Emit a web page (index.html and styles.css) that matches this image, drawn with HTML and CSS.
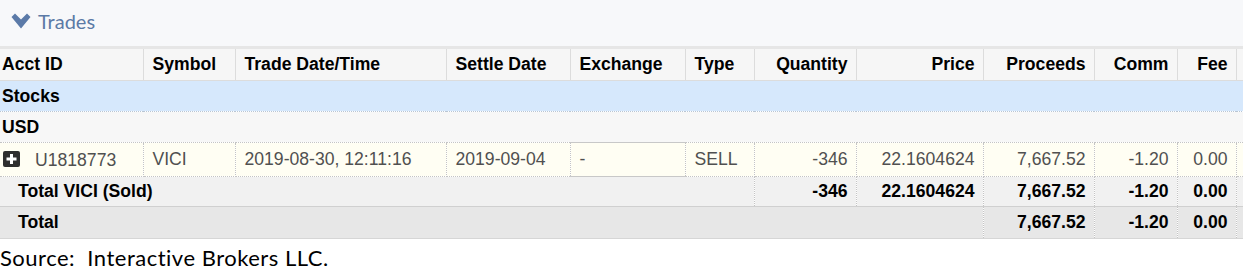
FILE: index.html
```html
<!DOCTYPE html>
<html>
<head>
<meta charset="utf-8">
<link rel="stylesheet" href="styles.css">
</head>
<body>
<div class="section-head">
  <svg class="chev" width="20" height="16" viewBox="0 0 20 16"><polygon points="0.5,4 4,0.5 10,6.5 16,0.5 19.5,4 10,15.5" fill="#5b7aa8"/></svg>
  <span class="section-title">Trades</span>
</div>
<div class="table-wrap">
<table class="trades">
  <colgroup>
    <col class="w-acct"><col class="w-sym"><col class="w-trade"><col class="w-settle"><col class="w-exch"><col class="w-type"><col class="w-qty"><col class="w-price"><col class="w-proc"><col class="w-comm"><col class="w-fee"><col class="w-extra">
  </colgroup>
  <thead>
    <tr class="hdr">
      <th class="first">Acct ID</th><th>Symbol</th><th>Trade Date/Time</th><th>Settle Date</th><th>Exchange</th><th>Type</th><th class="num">Quantity</th><th class="num">Price</th><th class="num">Proceeds</th><th class="num">Comm</th><th class="num">Fee</th><th></th>
    </tr>
  </thead>
  <tbody>
    <tr class="cat"><td colspan="12" class="first">Stocks</td></tr>
    <tr class="cur"><td colspan="12" class="first">USD</td></tr>
    <tr class="row">
      <td class="first acct"><span class="plus"><svg width="17" height="16" viewBox="0 0 17 16"><rect width="17" height="16" rx="2" fill="#2e2e2e"/><rect x="7" y="3" width="3" height="10" fill="#fff"/><rect x="3.5" y="6.5" width="10" height="3" fill="#fff"/></svg></span><span>U1818773</span></td>
      <td>VICI</td>
      <td>2019-08-30, 12:11:16</td>
      <td>2019-09-04</td>
      <td class="exch">-</td>
      <td>SELL</td>
      <td class="num">-346</td>
      <td class="num">22.1604624</td>
      <td class="num">7,667.52</td>
      <td class="num">-1.20</td>
      <td class="num">0.00</td>
      <td></td>
    </tr>
    <tr class="sub">
      <td colspan="6" class="label">Total VICI (Sold)</td>
      <td class="num">-346</td>
      <td class="num">22.1604624</td>
      <td class="num">7,667.52</td>
      <td class="num">-1.20</td>
      <td class="num">0.00</td>
      <td></td>
    </tr>
    <tr class="tot">
      <td colspan="8" class="label">Total</td>
      <td class="num">7,667.52</td>
      <td class="num">-1.20</td>
      <td class="num">0.00</td>
      <td></td>
    </tr>
  </tbody>
</table>
</div>
<p class="source">Source:&nbsp; Interactive Brokers LLC.</p>
</body>
</html>
```
FILE: styles.css
```css
html, body {
  margin: 0;
  padding: 0;
  background: #ffffff;
}
body {
  width: 1243px;
  overflow: hidden;
}
.section-head {
  display: flex;
  align-items: center;
  box-sizing: border-box;
  height: 49px;
  padding-left: 11px;
  padding-bottom: 5px;
  background: #f7f8fa;
  border-bottom: 3px solid #e6e6e6;
}
.chev {
  display: block;
  margin-right: 7px;
}
.section-title {
  font-family: Lato, "Liberation Sans", sans-serif;
  font-size: 20px;
  color: #5b7aa6;
}
.table-wrap {
  width: 1243px;
  overflow: hidden;
}
.trades {
  border-collapse: collapse;
  table-layout: fixed;
  width: 1296px;
  font-family: "Liberation Sans", Arial, sans-serif;
  font-size: 17.6px;
}
.w-acct { width: 143px; }
.w-sym { width: 92px; }
.w-trade { width: 211px; }
.w-settle { width: 124px; }
.w-exch { width: 115px; }
.w-type { width: 69px; }
.w-qty { width: 102px; }
.w-price { width: 127px; }
.w-proc { width: 111px; }
.w-comm { width: 83px; }
.w-fee { width: 59px; }
.w-extra { width: 60px; }

.trades th, .trades td {
  padding: 0 8px 0 9px;
  white-space: nowrap;
  overflow: hidden;
  vertical-align: middle;
}
.trades .first { padding-left: 2px; }
.trades .num { text-align: right; }

.hdr th {
  height: 31px;
  background: #f6f6f6;
  color: #000;
  font-weight: bold;
  text-align: left;
  border-left: 1px solid #dcdcdc;
  border-right: 1px solid #dcdcdc;
  border-bottom: 1px solid #dcdcdc;
}
.hdr th.num { text-align: right; }
.hdr th.first { border-left: none; }

.cat td {
  height: 30px;
  background: #d6e8fc;
  font-weight: bold;
  color: #000;
  border-bottom: 1px dotted #b9c6d4;
}
.cur td {
  height: 30px;
  background: #f7f7f7;
  font-weight: bold;
  color: #000;
  border-bottom: 1px dotted #c4c4c4;
}
.row td {
  height: 33px;
  background: #fffef3;
  color: #505050;
  border: 1px dotted #c4c4c4;
}
.row td.first { border-left: none; }
.row td.exch {
  border-top: 1px solid #c8c8c8;
  border-bottom: 1px solid #c8c8c8;
}
.plus {
  display: inline-block;
  vertical-align: middle;
  width: 17px;
  height: 16px;
  margin-left: 1px;
  margin-right: 15px;
  position: relative;
  top: -1px;
}
.plus svg { display: block; }
.acct span + span { vertical-align: middle; }

.sub td {
  height: 29px;
  background: #f1f1f1;
  font-weight: bold;
  color: #000;
  border-left: 1px dotted #c4c4c4;
  border-right: 1px dotted #c4c4c4;
  border-bottom: 1px solid #d0d0d0;
}
.sub td.label, .tot td.label {
  padding-left: 18px;
  border-left: none;
}
.tot td {
  height: 31px;
  background: #e7e7e7;
  font-weight: bold;
  color: #000;
  border-left: 1px dotted #c4c4c4;
  border-right: 1px dotted #c4c4c4;
  border-bottom: 1px solid #d6d6d6;
}
.source {
  margin: 5px 0 0 0;
  font-family: Lato, "Open Sans", sans-serif;
  font-size: 22px;
  letter-spacing: 0.5px;
  color: #000;
}
```
